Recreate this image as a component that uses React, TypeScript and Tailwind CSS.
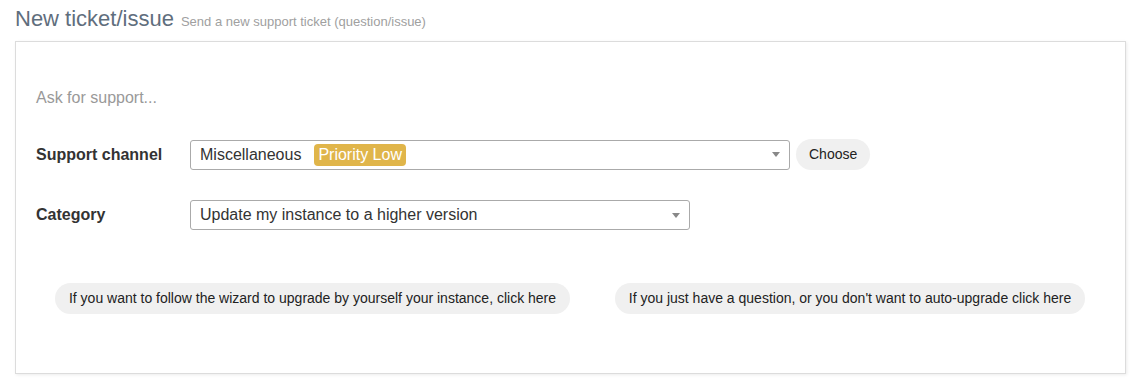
import { useState } from "react";

function Arrow() {
  return <span className="h-0 w-0 border-x-[4px] border-t-[5px] border-x-transparent border-t-[#888]" />;
}

export default function App() {
  const [channel] = useState("Miscellaneous");
  return (
    <div className="min-h-[389px] bg-white px-[15px] pt-[6px] font-['Liberation_Sans',Arial,sans-serif] text-[#333]">
      <div className="flex items-baseline gap-[7px]">
        <h1 className="text-[22px] leading-[26px] text-[#5f6e7d]">New ticket/issue</h1>
        <span className="text-[13px] text-[#a0a0a0]">Send a new support ticket (question/issue)</span>
      </div>

      <div className="mt-[9px] h-[333px] w-[1111px] border border-[#dcdcdc] px-[20px] pt-[46px] shadow-[1px_1px_3px_rgba(0,0,0,0.08)]">
        <p className="text-[16px] leading-[20px] text-[#999]">Ask for support...</p>

        <div className="mt-[31px] flex items-center">
          <label className="w-[154px] text-[16px] font-bold">Support channel</label>
          <div className="flex h-[30px] w-[600px] items-center justify-between rounded-[3px] border border-[#aaa] pl-[9px] pr-[9px]">
            <div className="flex items-center gap-[13px] text-[16px]">
              <span>{channel}</span>
              <span className="rounded-[4px] bg-[#e0b54a] px-[4px] leading-[22px] text-white">Priority Low</span>
            </div>
            <Arrow />
          </div>
          <button className="ml-[6px] h-[31px] rounded-full bg-[#f0f0f0] px-[13px] text-[14px] text-[#222]">Choose</button>
        </div>

        <div className="mt-[30px] flex items-center">
          <label className="w-[154px] text-[16px] font-bold">Category</label>
          <div className="flex h-[30px] w-[500px] items-center justify-between rounded-[3px] border border-[#aaa] pl-[9px] pr-[9px]">
            <span className="text-[16px]">Update my instance to a higher version</span>
            <Arrow />
          </div>
        </div>

        <div className="mt-[53px] flex gap-[45px] pl-[19px]">
          <button className="h-[31px] w-[515px] rounded-full bg-[#f0f0f0] text-[14px] text-[#222]">
            If you want to follow the wizard to upgrade by yourself your instance, click here
          </button>
          <button className="h-[31px] w-[470px] rounded-full bg-[#f0f0f0] text-[14px] text-[#222]">
            If you just have a question, or you don't want to auto-upgrade click here
          </button>
        </div>
      </div>
    </div>
  );
}
